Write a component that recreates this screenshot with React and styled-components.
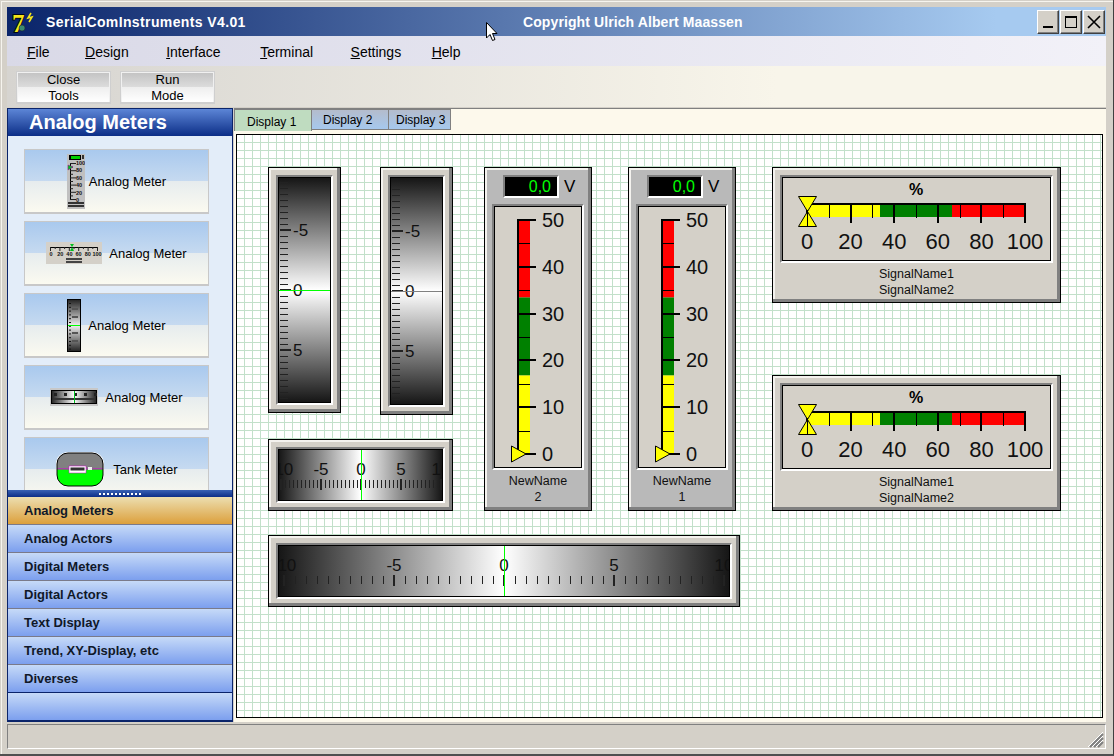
import React from 'react'
import styled, { createGlobalStyle } from 'styled-components'

const Global = createGlobalStyle`
  html, body { margin: 0; padding: 0; background: #d4d0c8; }
  body { font-family: "Liberation Sans", Arial, sans-serif; color: #000; }
  * { box-sizing: border-box; }
`

const Win = styled.div`
  position: relative;
  width: 1114px;
  height: 756px;
  overflow: hidden;
  display: flex;
  flex-direction: column;
  padding: 7px 7px 5px 7px;
  background: #d4d0c8;
  border-right: 1px solid #404040;
  border-bottom: 2px solid #505050;
  box-shadow: inset 1px 1px 0 #d4d0c8, inset 2px 2px 0 #f6f4ee;
`

const TitleBar = styled.div`
  height: 29px;
  flex: none;
  display: flex;
  align-items: center;
  padding-left: 5px;
  color: #fff;
  font-weight: bold;
  font-size: 14px;
  background: linear-gradient(90deg, #0a246a 0%, #a6caf0 90%);
`
const TitleText = styled.span`
  margin-left: 12px;
  width: 477px;
  white-space: nowrap;
  letter-spacing: ${p => p.$sp || 0}px;
`
const Copyright = styled.span`
  white-space: nowrap;
  letter-spacing: 0.1px;
`
const WinButtons = styled.div`
  margin-left: auto;
  margin-right: 1px;
  display: flex;
  gap: 1px;
`
const WinButton = styled.div`
  width: 22px;
  height: 24px;
  background: #d4d0c8;
  border: 1px solid;
  border-color: #fff #404040 #404040 #fff;
  box-shadow: inset -1px -1px 0 #808080;
  display: flex;
  align-items: center;
  justify-content: center;
`

const MenuBar = styled.div`
  height: 30px;
  flex: none;
  display: flex;
  align-items: center;
  padding: 2px 0 0 20px;
  font-size: 14px;
  background: linear-gradient(90deg, #d9d9e7, #f2f1f8);
`
const MenuItem = styled.span`
  margin-left: ${p => p.$gap}px;
  white-space: nowrap;
  &::first-letter { text-decoration: underline; }
`

const ToolBar = styled.div`
  height: 41px;
  flex: none;
  display: flex;
  gap: 9px;
  padding: 5px 0 0 9px;
  background: linear-gradient(90deg, #d6d4d0, #f8f5ea 70%);
`
const ToolButton = styled.div`
  width: 95px;
  height: 33px;
  font-size: 13px;
  line-height: 15.5px;
  text-align: center;
  border: 1px solid #cfcfcf;
  border-bottom-width: 2px;
  box-shadow: inset 1px 1px 0 #f0f0f0, inset -1px 0 0 #f0f0f0;
  background: linear-gradient(180deg, #c2c2c2 0%, #dcdcdc 50%, #eeeeee 50%, #ffffff 100%);
`

const Main = styled.div`
  flex: 1;
  display: flex;
  min-height: 0;
  margin-top: 1px;
`

const Side = styled.div`
  width: 226px;
  flex: none;
  display: flex;
  flex-direction: column;
  border: 1px solid #0a246a;
  background: #e3edf9;
`
const SideHead = styled.div`
  height: 27px;
  flex: none;
  padding-left: 21px;
  color: #fff;
  font-size: 20px;
  font-weight: bold;
  line-height: 27px;
  background: linear-gradient(180deg, #5c85d6, #0c2e87);
`
const SideList = styled.div`
  flex: 1;
  min-height: 0;
  overflow: hidden;
  display: flex;
  flex-direction: column;
  gap: 7px;
  padding: 13px 0 0 16px;
`
const Card = styled.div`
  width: 185px;
  height: 65px;
  flex: none;
  display: flex;
  align-items: center;
  justify-content: center;
  gap: ${p => p.$gap}px;
  font-size: 13px;
  border: 1px solid #c8c8c8;
  border-bottom-width: 2px;
  background: linear-gradient(180deg, #a9c9ee 0%, #c6daf0 50%, #e6ecee 50%, #fbfaf0 100%);
`
const Splitter = styled.div`
  height: 7px;
  flex: none;
  display: flex;
  justify-content: center;
  align-items: center;
  gap: 2px;
  background: linear-gradient(180deg, #3a62b4, #0c2e87);
`
const Dot = styled.i`
  width: 2px;
  height: 2px;
  background: #fff;
`
const GroupTab = styled.div`
  height: 28px;
  flex: none;
  padding-left: 16px;
  font-size: 13px;
  font-weight: bold;
  line-height: 28px;
  color: #101828;
  border-bottom: 1px solid ${p => p.$last ? '#0a246a' : '#7a7a8a'};
  background: ${p => p.$on
    ? 'linear-gradient(180deg, #ecdeb0, #dca03c)'
    : 'linear-gradient(180deg, #c6daf8, #7c9fee)'};
`

const Content = styled.div`
  flex: 1;
  min-width: 0;
  display: flex;
  flex-direction: column;
  background: #fdf9ec;
  border-top: 1px solid #808080;
  margin-left: 1px;
`
const Tabs = styled.div`
  height: 25px;
  flex: none;
  display: flex;
`
const Tab = styled.div`
  height: ${p => p.$on ? 22 : 21}px;
  width: ${p => p.$w}px;
  padding-left: ${p => p.$pad}px;
  font-size: 12px;
  line-height: ${p => p.$on ? 24 : 21}px;
  border: 1px solid #808080;
  border-left-width: ${p => p.$on ? 1 : 0}px;
  border-bottom-width: ${p => p.$on ? 0 : 1}px;
  background: ${p => p.$on ? '#bfdcc0' : 'linear-gradient(180deg, #b4bccc, #a6c8ee)'};
`
const Canvas = styled.div`
  position: relative;
  flex: 1;
  margin: 0 3px 4px 2px;
  border: 1px solid #000;
  background-color: #fff;
  background-image:
    linear-gradient(#c2e0ca 1px, transparent 1px),
    linear-gradient(90deg, #c2e0ca 1px, transparent 1px);
  background-size: 8px 8px;
  background-position: 7px 7px;
`

const Status = styled.div`
  height: 25px;
  flex: none;
  margin-top: 2px;
  border: 1px solid;
  border-color: #808080 #fff #fff #808080;
  position: relative;
`
const Grip = styled.svg`
  position: absolute;
  right: 1px;
  bottom: 0;
`

// meter frames sit on the free canvas, their place on it is the content
const Frame = styled.div`
  position: absolute;
  left: ${p => p.$x - 237}px;
  top: ${p => p.$y - 135}px;
  width: ${p => p.$w}px;
  height: ${p => p.$h}px;
  display: flex;
  flex-direction: column;
  padding: 7px 7px ${p => p.$pb || 7}px;
  background: ${p => p.$bg || '#d4d0c8'};
  border: 1px solid #000;
  box-shadow: inset -3px -3px 0 #808080, inset 2px 2px 0 #f4f2ee;
`
const Well = styled.div`
  flex: ${p => p.$fixed ? 'none' : 1};
  min-height: 0;
  border: 2px solid;
  border-color: #808080 #fff #fff #808080;
  display: flex;
`
const Face = styled.div`
  flex: 1;
  min-width: 0;
  border: 1px solid #000;
  overflow: hidden;
  background: ${p => p.$grad ? `linear-gradient(${p.$grad}, #161616, #ffffff 50%, #161616)` : '#d4d0c8'};
  svg { display: block; }
`
const Readout = styled.div`
  display: flex;
  align-items: center;
  margin: 0 0 6px 11px;
  font-size: 17px;
`
const ReadoutBox = styled.div`
  width: 56px;
  height: 23px;
  margin-right: 5px;
  padding-right: 6px;
  text-align: right;
  font-size: 16px;
  line-height: 20px;
  color: #00ff00;
  background: #000;
  border: 2px solid;
  border-color: #808080 #fff #fff #808080;
`
const Caption = styled.div`
  margin-top: 3px;
  font-size: 12.5px;
  line-height: 16px;
  text-align: center;
  color: #101010;
`
const Cursor = styled.svg`
  position: absolute;
  left: 485px;
  top: 21px;
`

const svgFont = { fontFamily: '"Liberation Sans", Arial, sans-serif' }

function range(n) {
  return Array.from({ length: n }, (_, i) => i)
}

function VGauge({ x, w, h, mid }) {
  const inner = h - 22
  const c = inner / 2
  return (
    <Frame $x={x} $y={167} $w={w} $h={h}>
      <Well>
        <Face $grad="180deg">
          <svg width="52" height={inner} style={svgFont}>
            {range(41).map(i => {
              const k = i - 20
              const major = k % 10 === 0
              return <rect key={i} x="1" y={c + k * 6 - (major ? 1 : 0)} width={major ? 11 : 8} height={major ? 2 : 1} fill="#222" />
            })}
            {[-5, 0, 5].map(v => (
              <text key={v} x={14} y={c + v * 12 + 6} fontSize="17" fill="#111">{v}</text>
            ))}
            <rect x="0" y={c} width="52" height="1" fill={mid} />
          </svg>
        </Face>
      </Well>
    </Frame>
  )
}

function HGauge({ x, y, w, step, per }) {
  const inner = w - 22
  const c = Math.round(inner / 2)
  const n = Math.floor(c / step)
  return (
    <Frame $x={x} $y={y} $w={w} $h={72}>
      <Well>
        <Face $grad="90deg">
          <svg width={inner} height="50" style={svgFont}>
            {range(n * 2 + 1).map(i => {
              const k = i - n
              const major = k % per === 0
              return <rect key={i} x={c + k * step - (major ? 1 : 0)} y={major ? 29 : 30} width={major ? 2 : 1} height={major ? 11 : 8} fill="#222" />
            })}
            {[-10, -5, 0, 5, 10].map(v => (
              <text key={v} x={c + (v / 5) * step * per} y="25" fontSize="17" textAnchor="middle" fill="#111">{v}</text>
            ))}
            <rect x={c} y="0" width="1" height="50" fill="#00ff00" />
          </svg>
        </Face>
      </Well>
    </Frame>
  )
}

function BarMeter({ x, name, sub }) {
  const pos = v => 247 - v * 4.68
  return (
    <Frame $x={x} $y={167} $w={108} $h={344} $bg="#b9b9b9" $pb={5}>
      <Readout>
        <ReadoutBox>0,0</ReadoutBox>
        V
      </Readout>
      <Well>
        <Face>
          <svg width="86" height="261" style={svgFont}>
            <rect x="24" y={pos(50)} width="11" height="77.5" fill="#ff0000" />
            <rect x="24" y={pos(50) + 77.5} width="11" height="78" fill="#008000" />
            <rect x="24" y={pos(50) + 155.5} width="11" height="78.5" fill="#ffff00" />
            <rect x="22" y={pos(50)} width="2" height="234" fill="#000" />
            {range(11).map(i => {
              const v = i * 5
              const major = i % 2 === 0
              return <rect key={i} x="22" y={Math.round(pos(v)) - (major ? 1 : 0)} width={major ? 19 : 13} height={major ? 2 : 1} fill="#000" />
            })}
            {[0, 10, 20, 30, 40, 50].map(v => (
              <text key={v} x="47" y={pos(v) + 7} fontSize="20" fill="#111">{v}</text>
            ))}
            <polygon points="16.5,239 31,247 16.5,255" fill="#ffff00" stroke="#000" />
          </svg>
        </Face>
      </Well>
      <Caption>{name}<br />{sub}</Caption>
    </Frame>
  )
}

function HBarMeter({ y }) {
  const pos = v => 24 + v * 2.18
  return (
    <Frame $x={772} $y={y} $w={289} $h={136}>
      <Well $fixed>
        <Face>
          <svg width="268" height="82" style={svgFont}>
            <text x="133" y="17" fontSize="16" fontWeight="bold" textAnchor="middle">%</text>
            <rect x={pos(0)} y="27" width="73" height="12" fill="#ffff00" />
            <rect x="97" y="27" width="72" height="12" fill="#008000" />
            <rect x="169" y="27" width="73" height="12" fill="#ff0000" />
            <rect x={pos(0)} y="25" width="219" height="2" fill="#000" />
            {range(11).map(i => {
              const major = i % 2 === 0
              return <rect key={i} x={Math.round(pos(i * 10)) - (major ? 1 : 0)} y="25" width={major ? 2 : 1} height={major ? 20 : 15} fill="#000" />
            })}
            <polygon points="15.5,18.5 33.5,18.5 15.5,48.5 33.5,48.5" fill="#ffff00" fillRule="evenodd" stroke="#000" />
            <line x1="24.5" y1="32" x2="24.5" y2="48" stroke="#000" />
            {[0, 20, 40, 60, 80, 100].map(v => (
              <text key={v} x={pos(v)} y="71" fontSize="22" textAnchor="middle" fill="#111">{v}</text>
            ))}
          </svg>
        </Face>
      </Well>
      <Caption>SignalName1<br />SignalName2</Caption>
    </Frame>
  )
}

function ThumbBar() {
  return (
    <svg width="18" height="55" style={svgFont}>
      <rect width="18" height="55" fill="#c0c0c0" />
      <rect x="2" y="1" width="12" height="5" fill="#000" />
      <rect x="4" y="2" width="9" height="3" fill="#00d000" />
      <rect x="15" y="1" width="2" height="4" fill="#333" />
      <rect x="3" y="9" width="1" height="36" fill="#000" />
      {range(11).map(i => <rect key={i} x="3" y={9 + i * 3.6} width={i % 2 ? 3 : 6} height="1" fill="#222" />)}
      {['100', '80', '60', '40', '20', '0'].map((t, i) => (
        <text key={t} x="9" y={11 + i * 7.4} fontSize="5.5" fontWeight="bold" fill="#111">{t}</text>
      ))}
      <polygon points="1,11 6,13 1,16" fill="#00c020" stroke="#a000a0" strokeWidth=".5" />
      <rect x="1" y="48" width="16" height="2" fill="#333" />
      <rect x="1" y="51" width="16" height="2" fill="#333" />
    </svg>
  )
}

function ThumbHBar() {
  return (
    <svg width="56" height="22" style={svgFont}>
      <rect width="56" height="22" fill="#d4d0c8" />
      <rect x="4" y="5" width="48" height="1" fill="#000" />
      {range(11).map(i => <rect key={i} x={4 + i * 4.7} y="5" width="1" height={i % 2 ? 2 : 4} fill="#222" />)}
      <polygon points="24,2 28,2 26,5 28,9 24,9 26,5" fill="#00c020" />
      {['0', '20', '40', '60', '80', '100'].map((t, i) => (
        <text key={t} x={5 + i * 9.2} y="14" fontSize="5.5" fontWeight="bold" textAnchor="middle" fill="#111">{t}</text>
      ))}
      <rect x="20" y="16" width="16" height="2" fill="#444" />
      <rect x="20" y="19" width="16" height="2" fill="#444" />
    </svg>
  )
}

function ThumbGrayV() {
  return (
    <svg width="14" height="53" style={svgFont}>
      <defs>
        <linearGradient id="gv" x1="0" y1="0" x2="0" y2="1">
          <stop offset="0" stopColor="#222" />
          <stop offset=".5" stopColor="#eee" />
          <stop offset="1" stopColor="#222" />
        </linearGradient>
      </defs>
      <rect x=".5" y=".5" width="13" height="52" fill="url(#gv)" stroke="#000" />
      {range(13).map(i => <rect key={i} x="2" y={4 + i * 3.8} width="2" height="1" fill="#111" />)}
      {[-2, -1, 1, 2].map(v => <rect key={v} x="5" y={26 + v * 8 - 1} width="6" height="2" fill="#555" />)}
      <rect x="1" y="26" width="12" height="1" fill="#00ff00" />
    </svg>
  )
}

function ThumbGrayH() {
  return (
    <svg width="48" height="18">
      <defs>
        <linearGradient id="gh" x1="0" y1="0" x2="1" y2="0">
          <stop offset="0" stopColor="#222" />
          <stop offset=".5" stopColor="#fff" />
          <stop offset="1" stopColor="#222" />
        </linearGradient>
      </defs>
      <rect width="48" height="18" fill="#c8c8c8" />
      <rect x="1.5" y="2.5" width="45" height="13" fill="url(#gh)" stroke="#000" />
      {range(5).map(i => <rect key={i} x={4 + i * 10} y="5" width="3" height="3" fill="#222" />)}
      <rect x="3" y="10" width="42" height="2" fill="#333" />
      <rect x="24" y="3" width="1" height="12" fill="#00c020" />
    </svg>
  )
}

function ThumbTank() {
  return (
    <svg width="50" height="35">
      <defs>
        <clipPath id="tk"><rect x="2" y="1" width="46" height="33" rx="11" /></clipPath>
      </defs>
      <rect x="1" y="0" width="48" height="35" rx="12" fill="#fff" />
      <g clipPath="url(#tk)">
        <rect width="50" height="17" fill="#808080" />
        <rect y="17" width="50" height="18" fill="#00ff00" />
        <rect y="16.5" width="50" height="1" fill="#d000d0" />
      </g>
      <rect x="2" y="1" width="46" height="33" rx="11" fill="none" stroke="#000" />
      <rect x="14" y="14" width="17" height="7" fill="#fff" stroke="#d000d0" strokeWidth=".5" />
      <rect x="15.5" y="15.5" width="14" height="3" fill="#333" />
      <rect x="33" y="15" width="4" height="3" fill="#eee" />
    </svg>
  )
}

function Logo() {
  return (
    <svg width="22" height="28" viewBox="0 0 22 28">
      <text x="0" y="24" fontSize="25" fontWeight="bold" fontFamily='"Liberation Serif", serif' fill="#f4e41c" stroke="#000" strokeWidth="1.6" paintOrder="stroke">7</text>
      <circle cx="10" cy="20" r="3" fill="#3a8a70" stroke="#222" strokeWidth=".5" />
      <polyline points="19,5 16,10 20,9 17,14" fill="none" stroke="#f4e41c" strokeWidth="1.6" />
    </svg>
  )
}

const menus = [['File', 0], ['Design', 35.5], ['Interface', 37.5], ['Terminal', 39.5], ['Settings', 37.5], ['Help', 30.5]]
const groups = ['Analog Meters', 'Analog Actors', 'Digital Meters', 'Digital Actors', 'Text Display', 'Trend, XY-Display, etc', 'Diverses', '']

export default function App() {
  return (
    <Win>
      <Global />
      <TitleBar>
        <Logo />
        <TitleText $sp={0.38}>SerialComInstruments V4.01</TitleText>
        <Copyright>Copyright Ulrich Albert Maassen</Copyright>
        <WinButtons>
          <WinButton>
            <svg width="14" height="14"><rect x="2" y="11" width="10" height="2" fill="#000" /></svg>
          </WinButton>
          <WinButton>
            <svg width="14" height="14"><rect x="1.5" y="1.5" width="11" height="11" fill="none" stroke="#000" /><rect x="1" y="1" width="12" height="2" fill="#000" /></svg>
          </WinButton>
          <WinButton>
            <svg width="14" height="14"><path d="M1 1 L13 13 M13 1 L1 13" stroke="#000" strokeWidth="1.6" /></svg>
          </WinButton>
        </WinButtons>
      </TitleBar>
      <MenuBar>
        {menus.map(([m, gap]) => <MenuItem key={m} $gap={gap}>{m}</MenuItem>)}
      </MenuBar>
      <ToolBar>
        <ToolButton>Close<br />Tools</ToolButton>
        <ToolButton>Run<br />Mode</ToolButton>
      </ToolBar>
      <Main>
        <Side>
          <SideHead>Analog Meters</SideHead>
          <SideList>
            <Card $gap={4}><ThumbBar />Analog Meter</Card>
            <Card $gap={7}><ThumbHBar />Analog Meter</Card>
            <Card $gap={7}><ThumbGrayV />Analog Meter</Card>
            <Card $gap={7}><ThumbGrayH />Analog Meter</Card>
            <Card $gap={8}><ThumbTank />Tank Meter</Card>
          </SideList>
          <Splitter>{range(11).map(i => <Dot key={i} />)}</Splitter>
          {groups.map((g, i) => (
            <GroupTab key={i} $on={i === 0} $last={i >= 6}>{g}</GroupTab>
          ))}
        </Side>
        <Content>
          <Tabs>
            <Tab $on $w={78} $pad={12}>Display 1</Tab>
            <Tab $w={77} $pad={11}>Display 2</Tab>
            <Tab $w={62} $pad={7}>Display 3</Tab>
          </Tabs>
          <Canvas>
            <VGauge x={268} w={73} h={246} mid="#00ff00" />
            <VGauge x={380} w={73} h={248} mid="#808080" />
            <HGauge x={268} y={439} w={185} step={4} per={10} />
            <HGauge x={268} y={535} w={472} step={11} per={10} />
            <BarMeter x={484} name="NewName" sub="2" />
            <BarMeter x={628} name="NewName" sub="1" />
            <HBarMeter y={167} />
            <HBarMeter y={375} />
          </Canvas>
        </Content>
      </Main>
      <Status>
        <Grip width="16" height="16">
          <path d="M15 2 L2 15 M15 6 L6 15 M15 10 L10 15" stroke="#808080" strokeWidth="2" />
          <path d="M15 0 L0 15 M15 4 L4 15 M15 8 L8 15" stroke="#fff" strokeWidth="1" />
        </Grip>
      </Status>
      <Cursor width="14" height="22">
        <path d="M1.5 1.5 L1.5 17 L5 13.5 L7.5 19.5 L10 18.5 L7.5 12.5 L12 12.5 Z" fill="#fff" stroke="#000" />
      </Cursor>
    </Win>
  )
}
